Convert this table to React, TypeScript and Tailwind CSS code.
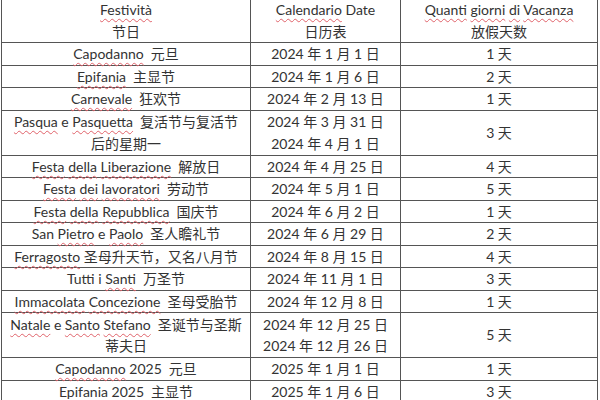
import React from 'react';

// spell-check style squiggle under italian words
function W({ children }: { children: React.ReactNode }) {
  return (
    <span className="underline decoration-wavy decoration-[#e0626a] decoration-1 underline-offset-[3px]">
      {children}
    </span>
  );
}

function Gap() {
  return <span className="inline-block w-[7px]" />;
}

interface Row {
  name: React.ReactNode;
  date: React.ReactNode;
  days: string;
  tall?: boolean;
}

const rows: Row[] = [
  { name: <><W>Capodanno</W><Gap />元旦</>, date: '2024 年 1 月 1 日', days: '1 天' },
  { name: <><W>Epifania</W><Gap />主显节</>, date: '2024 年 1 月 6 日', days: '2 天' },
  { name: <><W>Carnevale</W><Gap />狂欢节</>, date: '2024 年 2 月 13 日', days: '1 天' },
  {
    name: <><W>Pasqua</W> e <W>Pasquetta</W><Gap />复活节与复活节<br />后的星期一</>,
    date: <>2024 年 3 月 31 日<br />2024 年 4 月 1 日</>,
    days: '3 天',
    tall: true
  },
  { name: <><W>Festa</W> <W>della</W> <W>Liberazione</W><Gap />解放日</>, date: '2024 年 4 月 25 日', days: '4 天' },
  { name: <><W>Festa</W> <W>dei</W> <W>lavoratori</W><Gap />劳动节</>, date: '2024 年 5 月 1 日', days: '5 天' },
  { name: <><W>Festa</W> <W>della</W> <W>Repubblica</W><Gap />国庆节</>, date: '2024 年 6 月 2 日', days: '1 天' },
  { name: <>San <W>Pietro</W> e <W>Paolo</W><Gap />圣人瞻礼节</>, date: '2024 年 6 月 29 日', days: '2 天' },
  { name: <><W>Ferragosto</W> 圣母升天节，又名八月节</>, date: '2024 年 8 月 15 日', days: '4 天' },
  { name: <>Tutti i <W>Santi</W><Gap />万圣节</>, date: '2024 年 11 月 1 日', days: '3 天' },
  { name: <><W>Immacolata</W> <W>Concezione</W><Gap />圣母受胎节</>, date: '2024 年 12 月 8 日', days: '1 天' },
  {
    name: <><W>Natale</W> e <W>Santo</W> <W>Stefano</W><Gap />圣诞节与圣斯<br />蒂夫日</>,
    date: <>2024 年 12 月 25 日<br />2024 年 12 月 26 日</>,
    days: '5 天',
    tall: true
  },
  { name: <><W>Capodanno</W> 2025<Gap />元旦</>, date: '2025 年 1 月 1 日', days: '1 天' },
  { name: <><W>Epifania</W> 2025<Gap />主显节</>, date: '2025 年 1 月 6 日', days: '3 天' }
];

export default function App() {
  return (
    <div className="w-[600px] h-[400px] overflow-hidden bg-white text-[#333] text-[14px] font-['Lato','Noto_Sans_CJK_SC',sans-serif]">
      <div className="ml-px w-[597px] border-x border-[#555]">
        {/* Header */}
        <div className="flex h-[43px] border-b border-[#555]">
          <div className="w-[249px] border-r border-[#555] flex flex-col items-center justify-center leading-[22px]">
            <W>Festività</W>
            <span>节日</span>
          </div>
          <div className="w-[150px] border-r border-[#555] flex flex-col items-center justify-center leading-[22px]">
            <span><W>Calendario</W> Date</span>
            <span>日历表</span>
          </div>
          <div className="flex-1 flex flex-col items-center justify-center leading-[22px]">
            <span><W>Quanti</W> <W>giorni</W> <W>di</W> <W>Vacanza</W></span>
            <span>放假天数</span>
          </div>
        </div>

        {rows.map((row, i) => (
          <div
            key={i}
            className={`flex border-b border-[#555] ${row.tall ? 'h-[45px] leading-[21.5px]' : 'h-[22.5px] leading-[21px]'}`}
          >
            <div className="w-[249px] border-r border-[#555] flex items-center justify-center text-center whitespace-nowrap">
              <span>{row.name}</span>
            </div>
            <div className="w-[150px] border-r border-[#555] flex items-center justify-center text-center whitespace-nowrap">
              <span>{row.date}</span>
            </div>
            <div className="flex-1 flex items-center justify-center">
              {row.days}
            </div>
          </div>
        ))}
      </div>
    </div>
  );
}
